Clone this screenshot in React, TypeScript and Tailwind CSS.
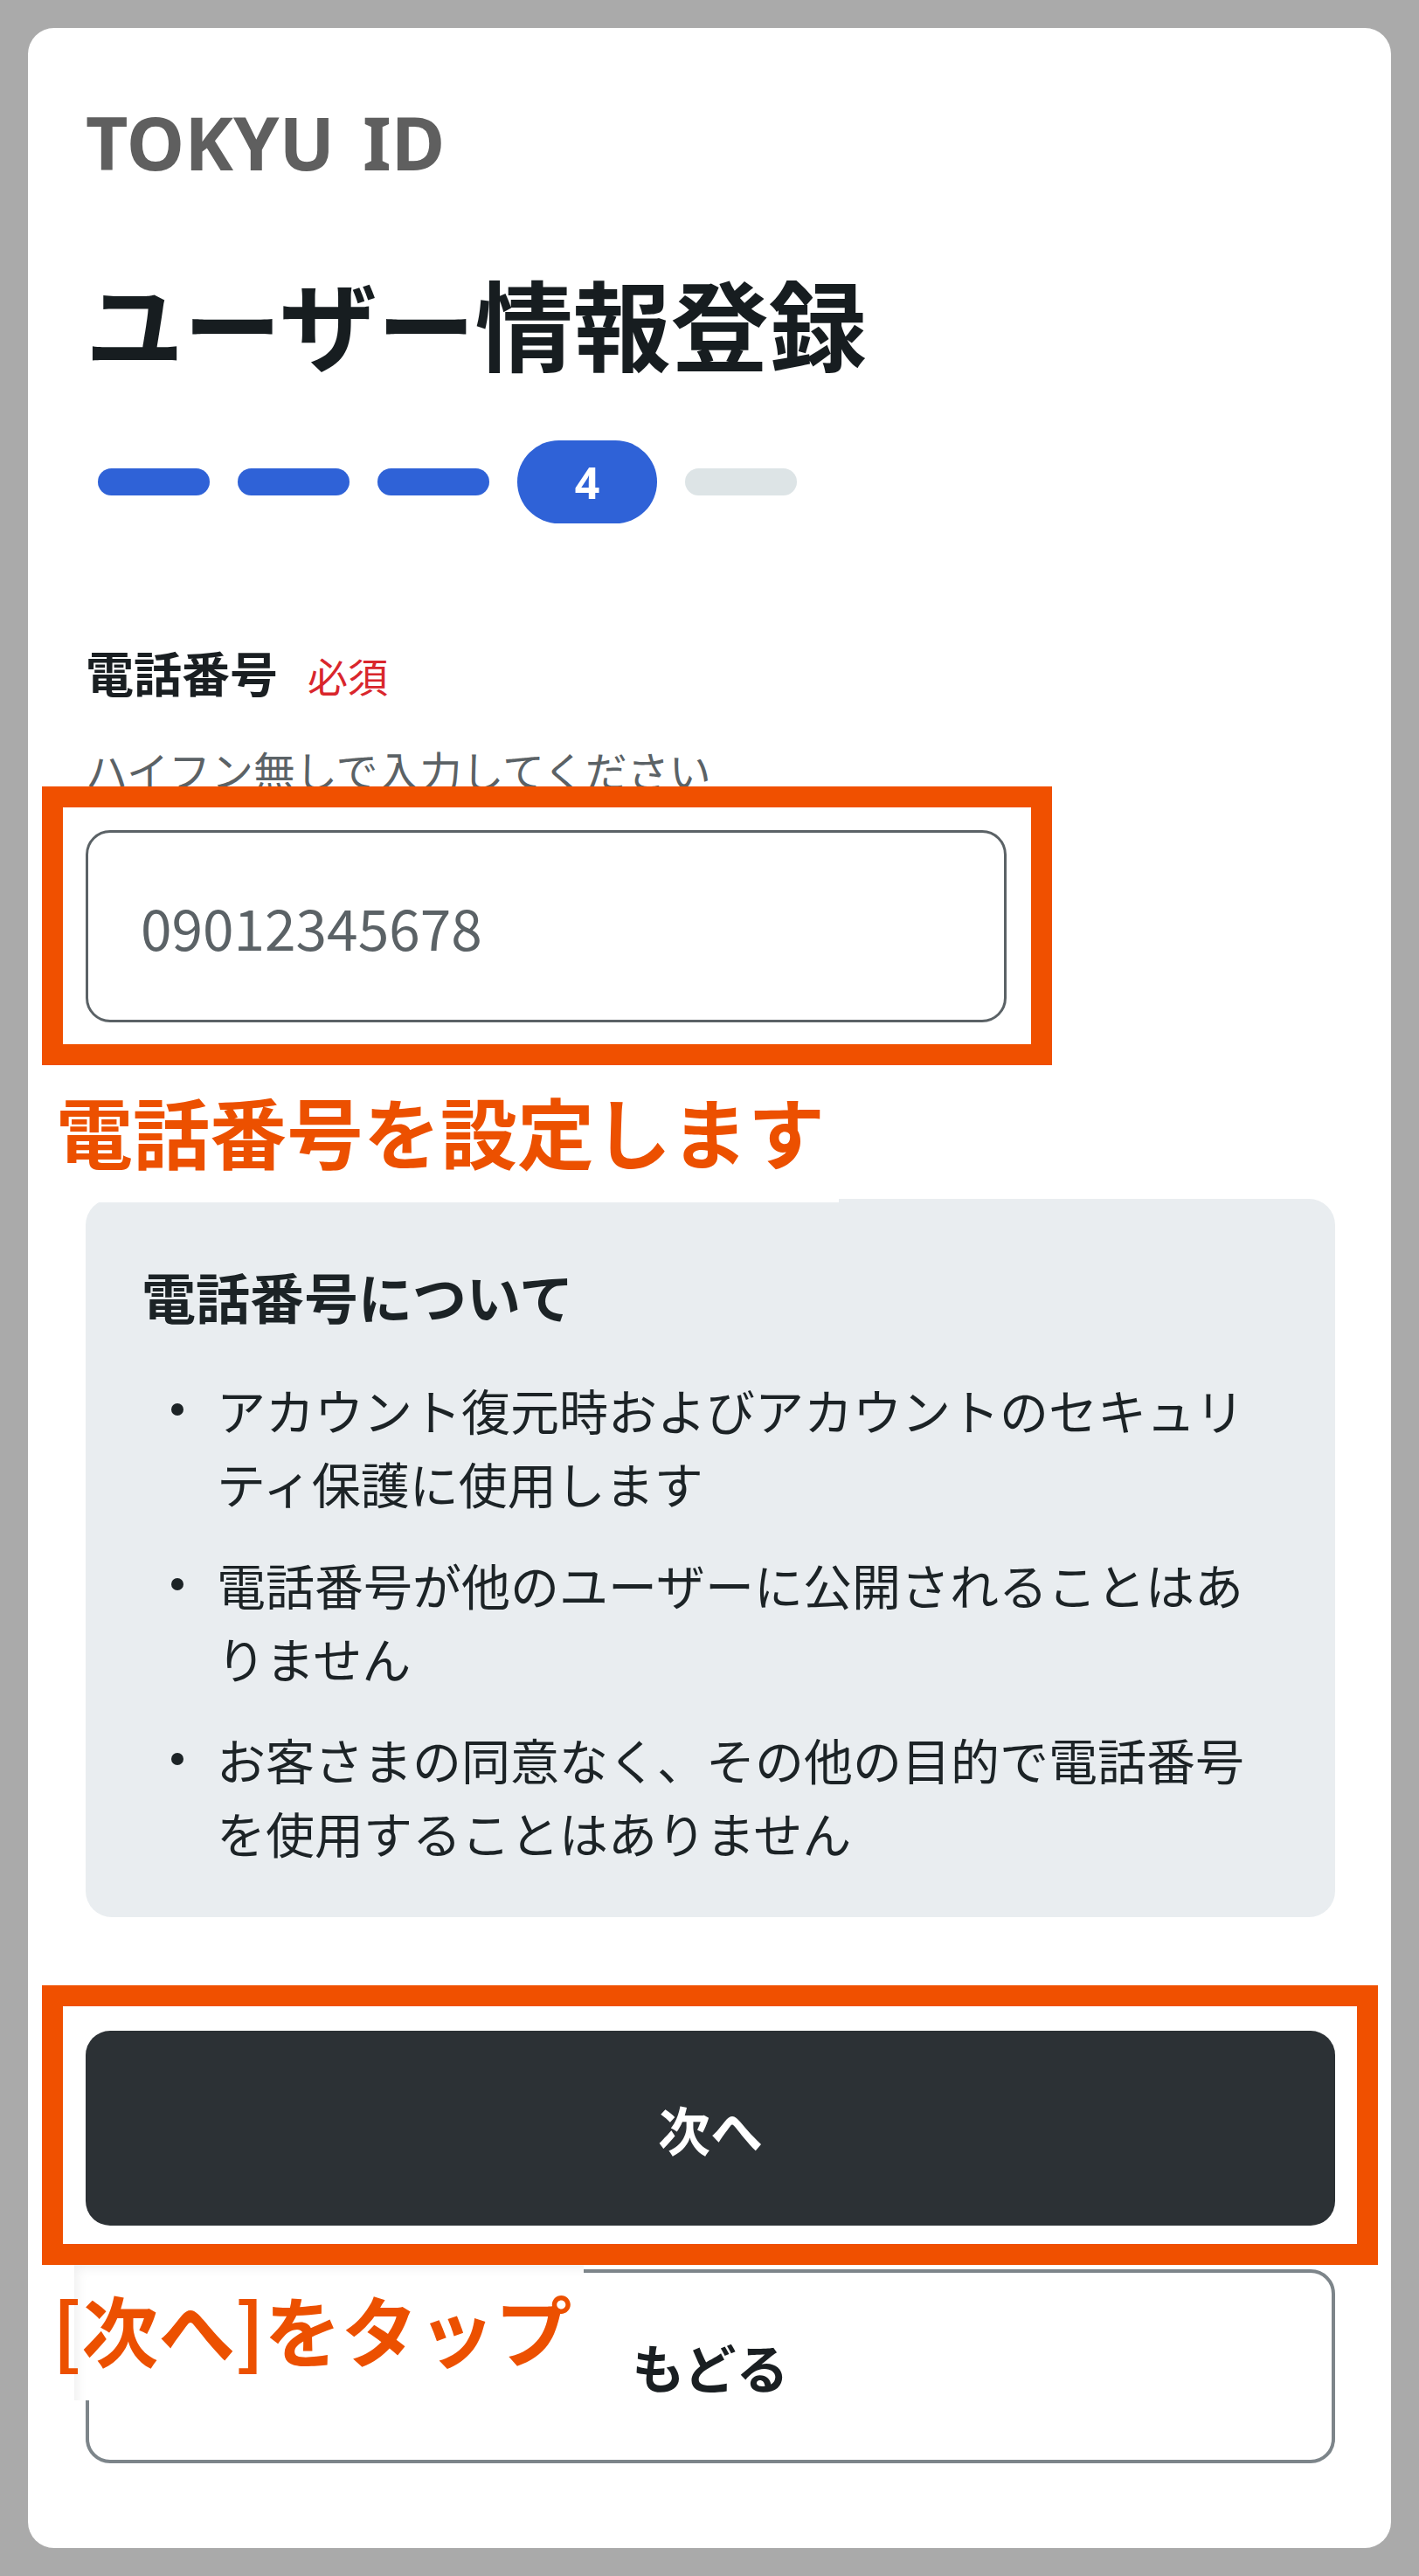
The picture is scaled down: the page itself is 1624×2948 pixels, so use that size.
const jp = { fontFamily: '"Noto Sans CJK JP", "Noto Sans", sans-serif' };

const notes = [
  'アカウント復元時およびアカウントのセキュリティ保護に使用します',
  '電話番号が他のユーザーに公開されることはありません',
  'お客さまの同意なく、その他の目的で電話番号を使用することはありません',
];

function Stepper() {
  return (
    <ol className="mt-[80px] flex items-center gap-[32px] pl-[14px]">
      <li className="h-[31px] w-[128px] rounded-full bg-[#2f62d7]" />
      <li className="h-[31px] w-[128px] rounded-full bg-[#2f62d7]" />
      <li className="h-[31px] w-[128px] rounded-full bg-[#2f62d7]" />
      <li
        className="flex h-[95px] w-[160px] items-center justify-center rounded-full bg-[#2f62d7] text-[50px] font-bold leading-none text-white"
        style={{ fontFamily: '"Noto Sans", sans-serif' }}
      >
        4
      </li>
      <li className="h-[31px] w-[128px] rounded-full bg-[#dde4e6]" />
    </ol>
  );
}

export default function App() {
  return (
    <div className="relative min-h-[2948px] bg-[#aaaaaa] p-[32px]" style={jp}>
      <div className="rounded-[30px] bg-white pb-[97px] pl-[66px] pr-[64px] pt-[89px]">
        <div
          className="text-[84px] font-bold leading-none text-[#5f5f5f]"
          style={{ fontFamily: '"Noto Sans", sans-serif' }}
        >
          TOKYU<span className="ml-[32px]">ID</span>
        </div>

        <h1 className="mt-[107px] text-[112px] font-bold leading-none text-[#171d20]">
          ユーザー情報登録
        </h1>

        <Stepper />

        <div className="mt-[142px] flex items-baseline gap-[34px]">
          <span className="text-[55px] font-bold leading-none text-[#1a1f22]">電話番号</span>
          <span className="text-[46px] leading-none text-[#d9262c]">必須</span>
        </div>
        <p className="mt-[60px] text-[48px] leading-none text-[#5b6266]">
          ハイフン無しで入力してください
        </p>
        <input
          readOnly
          value="09012345678"
          className="mt-[46px] block h-[220px] w-[1054px] rounded-[28px] border-[3px] border-[#5b6266] bg-white pl-[60px] text-[64px] text-[#5b6266] outline-none"
          style={jp}
        />

        <section className="mt-[202px] rounded-[30px] bg-[#e9edf0] pb-[55px] pl-[64px] pr-[64px] pt-[68px] text-[#1c2326]">
          <h2 className="text-[62px] font-bold leading-[87px]">電話番号について</h2>
          <ul className="mt-[44px] flex flex-col gap-[32px]">
            {notes.map((n) => (
              <li key={n} className="flex text-[56px] leading-[84px]">
                <span className="flex h-[84px] w-[86px] shrink-0 items-center pl-[34px]">
                  <span className="h-[14px] w-[14px] rounded-full bg-[#1c2326]" />
                </span>
                <span>{n}</span>
              </li>
            ))}
          </ul>
        </section>

        <button
          type="button"
          className="mt-[130px] flex h-[223px] w-full items-center justify-center rounded-[28px] bg-[#2c3135] text-[60px] font-bold text-white"
        >
          次へ
        </button>
        <button
          type="button"
          className="mt-[50px] flex h-[222px] w-full items-center justify-center rounded-[28px] border-[4px] border-[#7d858a] bg-white text-[60px] font-bold text-[#1a1f22]"
        >
          もどる
        </button>
      </div>

      {/* annotation overlays */}
      <div className="pointer-events-none absolute left-[48px] top-[900px] h-[319px] w-[1156px] border-[24px] border-[#f05000]" />
      <div className="absolute left-[64px] top-[1249px] bg-white pb-[39px] pr-[16px] text-[88px] font-bold leading-none text-[#ec5000]">
        電話番号を設定します
      </div>
      <div className="pointer-events-none absolute left-[48px] top-[2272px] h-[320px] w-[1529px] border-[24px] border-[#f05000]" />
      <div className="absolute left-[85px] top-[2592px] h-[155px] w-[583px] bg-white shadow-[inset_10px_10px_14px_-8px_rgba(0,0,0,0.08)]" />
      <div className="absolute left-[60px] top-[2620px] text-[88px] font-bold leading-none text-[#ec5000]">
        [次へ]をタップ
      </div>
    </div>
  );
}
